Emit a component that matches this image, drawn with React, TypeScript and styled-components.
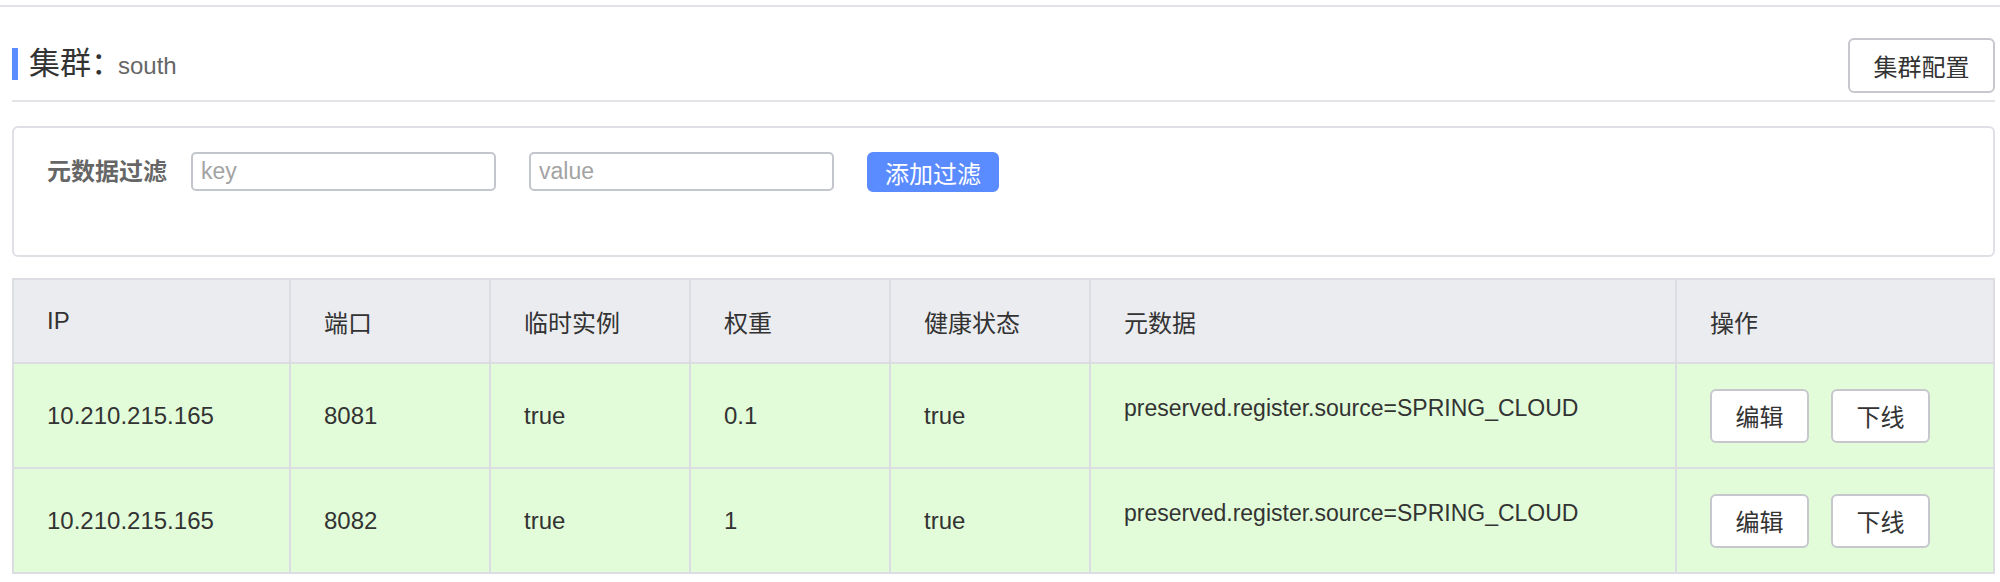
import * as React from 'react';
import styled, { createGlobalStyle } from 'styled-components';

const GlobalStyle = createGlobalStyle`
  html, body {
    margin: 0;
    padding: 0;
    background: #fff;
  }
  body {
    font-family: "Liberation Sans", "Noto Sans CJK SC", sans-serif;
    color: #333;
  }
  * {
    box-sizing: border-box;
  }
`;

const Page = styled.div`
  margin-top: 5px;
  border-top: 2px solid #e2e2e6;
  padding: 0 5px 0 12px;
`;

const Header = styled.div`
  display: flex;
  justify-content: space-between;
  align-items: center;
  padding: 31px 0 7px;
  border-bottom: 2px solid #e4e4e8;
`;

const Title = styled.div`
  display: flex;
  align-items: center;
`;

const TitleBar = styled.span`
  width: 6px;
  height: 32px;
  background: #5b8cff;
  margin-right: 11px;
  margin-top: -4px;
`;

const TitleText = styled.span`
  font-size: 31px;
  color: #333;
  line-height: 40px;
  margin-top: -4px;
`;

const ClusterName = styled.span`
  font-size: 24px;
  color: #666;
  margin-left: -4px;
`;

const Button = styled.button<{ $w: number; $h: number; $primary?: boolean }>`
  width: ${({ $w }) => $w}px;
  height: ${({ $h }) => $h}px;
  padding: 0;
  font-family: inherit;
  font-size: 24px;
  border-radius: 6px;
  cursor: pointer;
  border: 2px solid ${({ $primary }) => ($primary ? '#5a8bff' : '#c6c8ce')};
  background: ${({ $primary }) => ($primary ? '#5a8bff' : '#fff')};
  color: ${({ $primary }) => ($primary ? '#fff' : '#333')};
`;

const FilterCard = styled.div`
  margin-top: 24px;
  height: 131px;
  border: 2px solid #dfe0e6;
  border-radius: 6px;
  padding: 24px 33px;
  display: flex;
  align-items: flex-start;
`;

const FilterLabel = styled.label`
  font-size: 24px;
  font-weight: bold;
  color: #666;
  line-height: 40px;
  margin-right: 24px;
`;

const FilterInput = styled.input`
  width: 305px;
  height: 39px;
  margin-right: 33px;
  padding: 0 8px;
  border: 2px solid #c4c6cd;
  border-radius: 5px;
  font-family: inherit;
  font-size: 23px;
  color: #333;
  outline: none;
  &::placeholder {
    color: #a3a3a3;
  }
`;

const Table = styled.table`
  margin-top: 21px;
  width: 100%;
  table-layout: fixed;
  border-collapse: collapse;
  font-size: 24px;
  color: #333;
`;

const HeadCell = styled.th`
  height: 84px;
  padding: 0 0 0 33px;
  text-align: left;
  font-weight: normal;
  background: #ebecf0;
  border: 2px solid #dcdde2;
`;

const Cell = styled.td<{ $top?: boolean }>`
  height: 105px;
  padding: ${({ $top }) => ($top ? '26px 0 0 33px' : '0 0 0 33px')};
  vertical-align: ${({ $top }) => ($top ? 'top' : 'middle')};
  font-size: ${({ $top }) => ($top ? '23px' : '24px')};
  background: #e2fcd9;
  border: 2px solid #dcdde2;
  line-height: 36px;
`;

const Actions = styled.div`
  display: flex;
  gap: 22px;
`;

const columns = [
  { title: 'IP', width: 277 },
  { title: '端口', width: 200 },
  { title: '临时实例', width: 200 },
  { title: '权重', width: 200 },
  { title: '健康状态', width: 200 },
  { title: '元数据', width: 586 },
  { title: '操作', width: undefined },
];

const instances = [
  { ip: '10.210.215.165', port: 8081, ephemeral: 'true', weight: '0.1', healthy: 'true', metadata: 'preserved.register.source=SPRING_CLOUD' },
  { ip: '10.210.215.165', port: 8082, ephemeral: 'true', weight: '1', healthy: 'true', metadata: 'preserved.register.source=SPRING_CLOUD' },
];

export default function App() {
  const [key, setKey] = React.useState('');
  const [value, setValue] = React.useState('');

  return (
    <Page>
      <GlobalStyle />
      <Header>
        <Title>
          <TitleBar />
          <TitleText>集群：</TitleText>
          <ClusterName>south</ClusterName>
        </Title>
        <Button $w={147} $h={55}>集群配置</Button>
      </Header>

      <FilterCard>
        <FilterLabel>元数据过滤</FilterLabel>
        <FilterInput placeholder="key" value={key} onChange={(e) => setKey(e.target.value)} />
        <FilterInput placeholder="value" value={value} onChange={(e) => setValue(e.target.value)} />
        <Button $w={132} $h={40} $primary>添加过滤</Button>
      </FilterCard>

      <Table>
        <colgroup>
          {columns.map((c) => (
            <col key={c.title} style={c.width ? { width: c.width } : undefined} />
          ))}
        </colgroup>
        <thead>
          <tr>
            {columns.map((c) => (
              <HeadCell key={c.title}>{c.title}</HeadCell>
            ))}
          </tr>
        </thead>
        <tbody>
          {instances.map((row) => (
            <tr key={row.port}>
              <Cell>{row.ip}</Cell>
              <Cell>{row.port}</Cell>
              <Cell>{row.ephemeral}</Cell>
              <Cell>{row.weight}</Cell>
              <Cell>{row.healthy}</Cell>
              <Cell $top>{row.metadata}</Cell>
              <Cell>
                <Actions>
                  <Button $w={99} $h={54}>编辑</Button>
                  <Button $w={99} $h={54}>下线</Button>
                </Actions>
              </Cell>
            </tr>
          ))}
        </tbody>
      </Table>
    </Page>
  );
}
